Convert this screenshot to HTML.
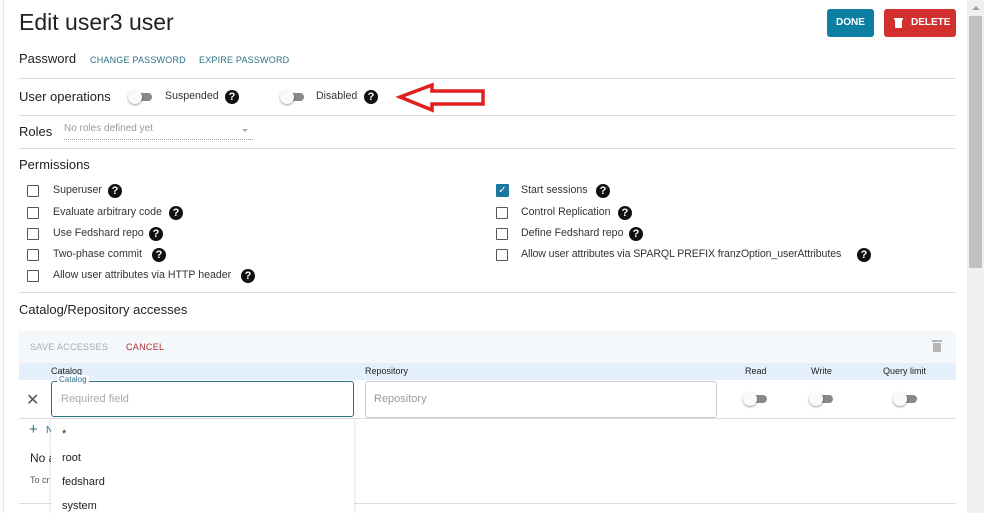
<!DOCTYPE html>
<html><head><style>
body{margin:0;width:984px;height:513px;overflow:hidden;background:#fff;font-family:"Liberation Sans",sans-serif;color:#222;position:relative}
.a{position:absolute;white-space:nowrap}
.hr{position:absolute;left:19px;width:937px;height:1px;background:#ddd}
.q{position:absolute;width:14px;height:14px;border-radius:50%;background:#111;color:#fff;font-size:11px;font-weight:bold;text-align:center;line-height:14px}
.cb{position:absolute;width:10px;height:10px;border:1.5px solid #555;border-radius:1px}
.sw{position:absolute;width:24px;height:14px}
.sw .t{position:absolute;left:4px;top:3px;width:20px;height:8px;border-radius:4px;background:#888}
.sw .k{position:absolute;left:0;top:0;width:14px;height:14px;border-radius:50%;background:#fafafa;box-shadow:0 1px 2px rgba(0,0,0,.4)}
.s13{font-size:10.6px;color:#333}
</style></head><body>
<div class="a" style="left:3px;top:0;width:1px;height:513px;background:#e6e6e6"></div>
<div class="a" style="left:19px;top:9px;font-size:23px;color:#222">Edit user3 user</div>
<div class="a" style="left:827px;top:9px;width:47px;height:28px;background:#0d7fa3;border-radius:3px;color:#fff;font-size:10px;font-weight:bold;text-align:center;line-height:28px">DONE</div>
<div class="a" style="left:884px;top:9px;width:72px;height:28px;background:#d32f2f;border-radius:3px;color:#fff;font-size:10px;font-weight:bold;line-height:28px"><span style="position:absolute;left:11px;top:11px;width:7px;height:8px;background:#fff;border-radius:0 0 1px 1px"></span><span style="position:absolute;left:10px;top:9px;width:9px;height:1.5px;background:#fff"></span><span style="position:absolute;left:27px;top:0">DELETE</span></div>
<div class="a" style="left:967px;top:0;width:17px;height:513px;background:#f0f0f0"></div>
<div class="a" style="left:969px;top:16px;width:13px;height:252px;background:#c1c1c1"></div>
<div class="a" style="left:972px;top:6px;width:0;height:0;border-left:4px solid transparent;border-right:4px solid transparent;border-bottom:4px solid #a0a0a0"></div>

<div class="a" style="left:19px;top:51px;font-size:13px">Password</div>
<div class="a" style="left:90px;top:55px;font-size:9px;color:#2a6f86;letter-spacing:.2px">CHANGE PASSWORD</div>
<div class="a" style="left:199px;top:55px;font-size:9px;color:#2a6f86;letter-spacing:.2px">EXPIRE PASSWORD</div>
<div class="hr" style="top:78px"></div>

<div class="a" style="left:19px;top:89px;font-size:13px">User operations</div>
<div class="sw" style="left:128px;top:90px"><div class="t"></div><div class="k"></div></div>
<div class="a s13" style="left:165px;top:90px">Suspended</div>
<div class="q" style="left:225px;top:90px">?</div>
<div class="sw" style="left:280px;top:90px"><div class="t"></div><div class="k"></div></div>
<div class="a s13" style="left:316px;top:90px">Disabled</div>
<div class="q" style="left:364px;top:90px">?</div>
<svg class="a" style="left:396px;top:82px" width="92" height="32"><path d="M4 15 L36 3 L36 9 L87 9 L87 22 L36 22 L36 28 Z" fill="none" stroke="#e02020" stroke-width="3.5" stroke-linejoin="miter"/></svg>
<div class="hr" style="top:115px"></div>

<div class="a" style="left:19px;top:124px;font-size:13px">Roles</div>
<div class="a" style="left:64px;top:123px;font-size:10px;color:#999">No roles defined yet</div>
<div class="a" style="left:242px;top:129px;border-left:3px solid transparent;border-right:3px solid transparent;border-top:3px solid #aaa"></div>
<div class="a" style="left:64px;top:139px;width:189px;border-top:1px dotted #999"></div>
<div class="hr" style="top:148px"></div>

<div class="a" style="left:19px;top:157px;font-size:13px">Permissions</div>
<div class="cb" style="left:27px;top:185px"></div><div class="a s13" style="left:53px;top:184px">Superuser</div><div class="q" style="left:108px;top:184px">?</div>
<div class="cb" style="left:27px;top:207px"></div><div class="a s13" style="left:53px;top:206px">Evaluate arbitrary code</div><div class="q" style="left:169px;top:206px">?</div>
<div class="cb" style="left:27px;top:228px"></div><div class="a s13" style="left:53px;top:227px">Use Fedshard repo</div><div class="q" style="left:149px;top:227px">?</div>
<div class="cb" style="left:27px;top:249px"></div><div class="a s13" style="left:53px;top:248px">Two-phase commit</div><div class="q" style="left:152px;top:248px">?</div>
<div class="cb" style="left:27px;top:270px"></div><div class="a s13" style="left:53px;top:269px">Allow user attributes via HTTP header</div><div class="q" style="left:241px;top:269px">?</div>

<div class="a" style="left:496px;top:184px;width:13px;height:13px;background:#1a78a0;border-radius:1px;color:#fff;font-size:10px;text-align:center;line-height:13px">✓</div><div class="a s13" style="left:521px;top:184px">Start sessions</div><div class="q" style="left:596px;top:184px">?</div>
<div class="cb" style="left:496px;top:207px"></div><div class="a s13" style="left:521px;top:206px">Control Replication</div><div class="q" style="left:618px;top:206px">?</div>
<div class="cb" style="left:496px;top:228px"></div><div class="a s13" style="left:521px;top:227px">Define Fedshard repo</div><div class="q" style="left:629px;top:227px">?</div>
<div class="cb" style="left:496px;top:249px"></div><div class="a s13" style="left:521px;top:248px;letter-spacing:-.1px">Allow user attributes via SPARQL PREFIX franzOption_userAttributes</div><div class="q" style="left:857px;top:248px">?</div>
<div class="hr" style="top:292px"></div>

<div class="a" style="left:19px;top:302px;font-size:13px">Catalog/Repository accesses</div>
<div class="a" style="left:19px;top:331px;width:937px;height:32px;background:#f4f8fa"></div>
<div class="a" style="left:30px;top:342px;font-size:9px;color:#aaa;letter-spacing:.3px">SAVE ACCESSES</div>
<div class="a" style="left:126px;top:342px;font-size:9px;color:#b03030;letter-spacing:.3px">CANCEL</div>
<div class="a" style="left:933px;top:343px;width:8px;height:9px;background:#b5b5b5"></div>
<div class="a" style="left:932px;top:340px;width:10px;height:2px;background:#b5b5b5"></div>
<div class="a" style="left:19px;top:363px;width:937px;height:17px;background:#e3f0fb"></div>
<div class="a" style="left:51px;top:366px;font-size:9px;color:#222">Catalog</div>
<div class="a" style="left:365px;top:366px;font-size:9px;color:#222">Repository</div>
<div class="a" style="left:745px;top:366px;font-size:9px;color:#222">Read</div>
<div class="a" style="left:811px;top:366px;font-size:9px;color:#222">Write</div>
<div class="a" style="left:883px;top:366px;font-size:9px;color:#222">Query limit</div>
<div class="a" style="left:26px;top:390px;font-size:16px;color:#555">✕</div>
<div class="a" style="left:51px;top:381px;width:301px;height:34px;border:1px solid #2a6f86;border-radius:3px"></div>
<div class="a" style="left:57px;top:375px;font-size:8px;color:#2a6f86;background:#fff;padding:0 2px">Catalog</div>
<div class="a" style="left:61px;top:393px;font-size:11px;color:#aaa">Required field</div>
<div class="a" style="left:365px;top:381px;width:350px;height:35px;border:1px solid #ccc;border-radius:3px"></div>
<div class="a" style="left:374px;top:393px;font-size:11px;color:#999">Repository</div>
<div class="sw" style="left:743px;top:392px"><div class="t"></div><div class="k"></div></div>
<div class="sw" style="left:809px;top:392px"><div class="t"></div><div class="k"></div></div>
<div class="sw" style="left:893px;top:392px"><div class="t"></div><div class="k"></div></div>
<div class="hr" style="top:418px"></div>
<div class="a" style="left:29px;top:421px;font-size:15px;color:#2a6f86">+</div>
<div class="a" style="left:46px;top:425px;font-size:10px;color:#2a6f86">N</div>
<div class="a" style="left:30px;top:451px;font-size:12px">No a</div>
<div class="a" style="left:30px;top:475px;font-size:9px;color:#555">To cr</div>
<div class="hr" style="top:503px"></div>
<div class="a" style="left:51px;top:419px;width:303px;height:94px;background:#fff;box-shadow:0 1px 3px rgba(0,0,0,.2)"></div>
<div class="a" style="left:62px;top:428px;font-size:11px">*</div>
<div class="a" style="left:62px;top:452px;font-size:11px">root</div>
<div class="a" style="left:62px;top:476px;font-size:11px">fedshard</div>
<div class="a" style="left:62px;top:500px;font-size:11px">system</div>
</body></html>
